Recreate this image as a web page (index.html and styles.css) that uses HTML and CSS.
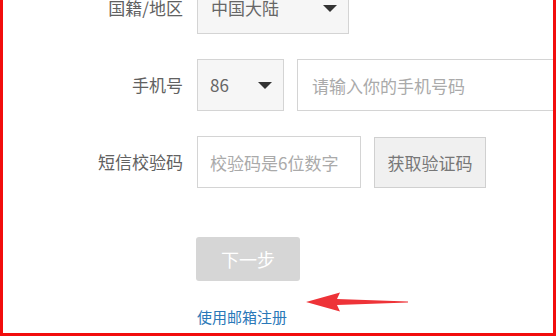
FILE: index.html
```html
<!DOCTYPE html>
<html lang="zh-CN">
<head>
  <meta charset="UTF-8">
  <meta name="viewport" content="width=device-width, initial-scale=1.0">
  <title>注册</title>
  <link rel="stylesheet" href="styles.css">
</head>
<body>
  <div class="frame">
    <!-- 注册表单 -->
    <div class="reg-form">
      <div class="row">
        <label class="label">国籍/地区</label>
        <div class="select select-country">
          <span>中国大陆</span>
          <i class="caret"></i>
        </div>
      </div>

      <div class="row">
        <label class="label">手机号</label>
        <div class="select select-code">
          <span>86</span>
          <i class="caret"></i>
        </div>
        <input class="input input-phone" type="text" placeholder="请输入你的手机号码">
      </div>

      <div class="row">
        <label class="label">短信校验码</label>
        <input class="input input-sms" type="text" placeholder="校验码是6位数字">
        <button class="btn-sms">获取验证码</button>
      </div>

      <div class="actions">
        <button class="btn-next" disabled>下一步</button>
        <a class="email-link" href="#">使用邮箱注册</a>
      </div>
    </div>

    <!-- 标注箭头 -->
    <svg class="arrow" width="108" height="26" viewBox="0 0 108 26">
      <path d="M2 13 L36 3.5 L33 10 L104 12.5 L104 13.5 L33 16 L36 22.5 Z" fill="#ee3338"/>
    </svg>
  </div>
</body>
</html>
```

FILE: styles.css
```css
* { margin: 0; padding: 0; box-sizing: border-box; font-family: "Microsoft YaHei", "Noto Sans CJK SC", sans-serif; }
body { background: #fff; color: #666; }

.frame {
  width: 556px;
  height: 336px;
  border: 3px solid #f20d0d;
  border-top: none;
  overflow: hidden;
  position: relative;
}

.reg-form {
  margin-top: -18px;
  display: flex;
  flex-direction: column;
}

.row {
  display: flex;
  align-items: center;
  height: 52px;
  margin-bottom: 25px;
}

.label {
  width: 180px;
  margin-right: 14px;
  text-align: right;
  font-size: 17px;
  line-height: 20px;
  color: #616161;
  flex-shrink: 0;
}

.select {
  height: 52px;
  border: 1px solid #d4d4d4;
  background: #f6f6f6;
  display: flex;
  align-items: center;
  justify-content: space-between;
  padding: 0 11px 0 13px;
  font-size: 17px;
  line-height: 20px;
  color: #666;
  flex-shrink: 0;
}
.select-country { width: 152px; }
.select-code { width: 87px; padding-left: 12px; }

.caret {
  width: 0;
  height: 0;
  border-left: 7px solid transparent;
  border-right: 7px solid transparent;
  border-top: 7px solid #333;
}

.input {
  height: 52px;
  border: 1px solid #d4d4d4;
  background: #fff;
  padding: 0 12px;
  font-size: 17px;
  color: #666;
  outline: none;
  flex-shrink: 0;
}
.input::placeholder { color: #aaa; }
.input-phone { width: 290px; margin-left: 13px; padding-left: 14px; }
.input-sms { width: 164px; }

.btn-sms {
  width: 112px;
  height: 51px;
  margin-left: 13px;
  border: 1px solid #d0d0d0;
  background: #f0f0f0;
  color: #777;
  font-size: 17px;
  cursor: pointer;
}

.actions {
  padding-left: 193px;
  margin-top: 24px;
  display: flex;
  flex-direction: column;
  align-items: flex-start;
}

.btn-next {
  width: 104px;
  height: 44px;
  border: none;
  border-radius: 3px;
  background: #d6d6d6;
  color: #fff;
  font-size: 18px;
}

.email-link {
  margin-top: 26px;
  margin-left: 1px;
  font-size: 15px;
  line-height: 20px;
  color: #2a78b8;
  text-decoration: none;
}

.arrow {
  position: absolute;
  left: 301px;
  top: 289px;
}
```
